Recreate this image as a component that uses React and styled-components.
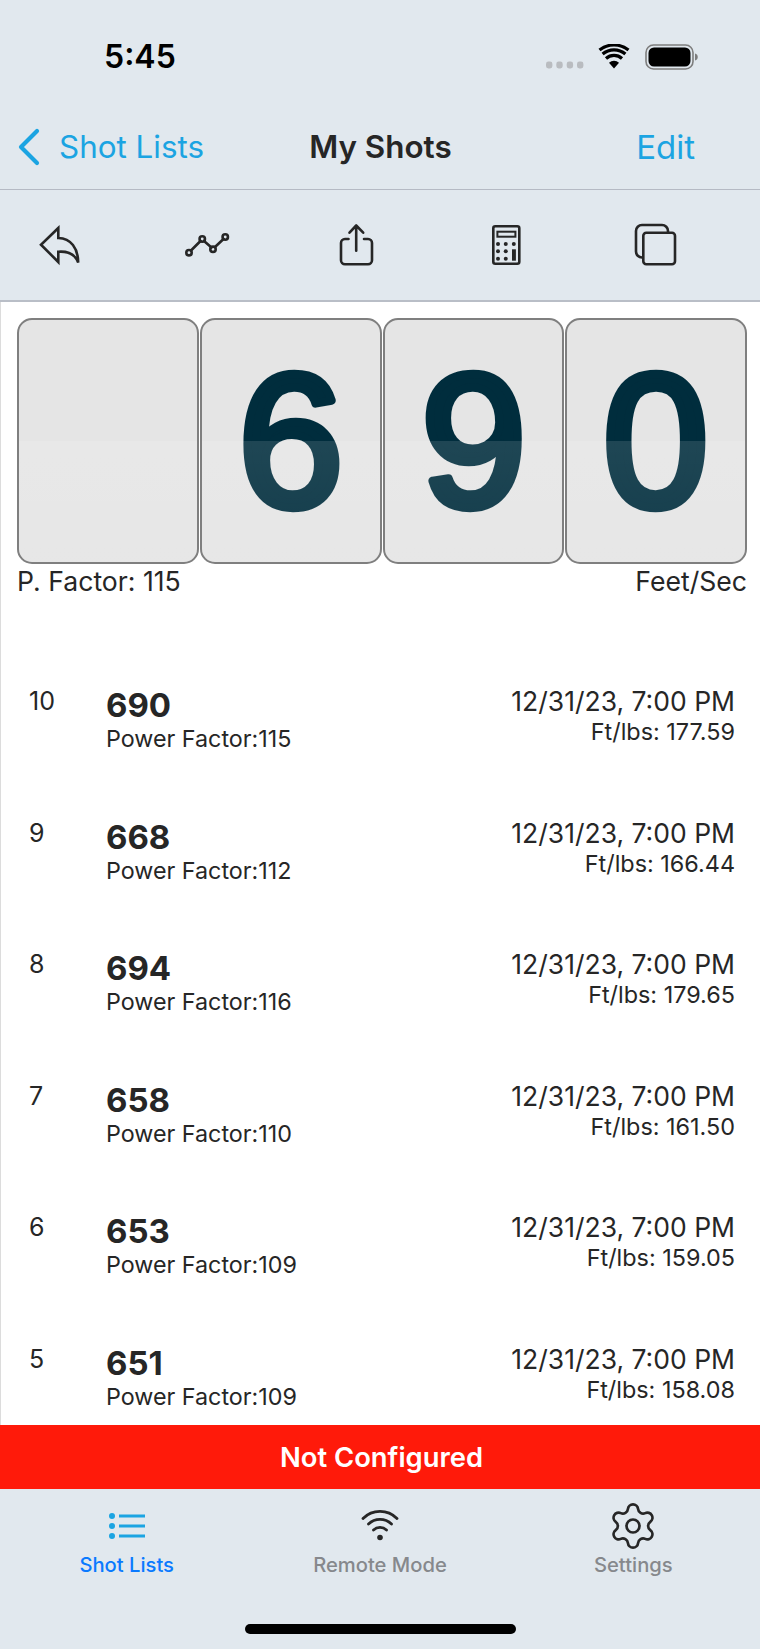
import React from 'react';
import styled, { createGlobalStyle } from 'styled-components';
import { Settings } from 'lucide-react';

const Global = createGlobalStyle`
  html, body { margin: 0; padding: 0; background: #fff; }
  * { box-sizing: border-box; }
  body { font-family: Inter, "Liberation Sans", sans-serif; color: #262626; }
`;

const Page = styled.div`
  width: 760px; height: 1649px; display: flex; flex-direction: column; overflow: hidden;
`;
const Top = styled.header`
  height: 189px; background: #e1e8ee; display: flex; flex-direction: column; flex: none;
`;
const Status = styled.div`
  height: 114px; flex: none; padding: 38px 62px 0 104px; display: flex; justify-content: space-between; align-items: flex-start;
`;
const Clock = styled.div`
  font-size: 32px; line-height: 38px; font-weight: 600; color: #000;
`;
const StatusIcons = styled.div`
  display: flex; align-items: center; gap: 14px; height: 38px; svg { display: block; }
`;
const Nav = styled.nav`
  height: 66px; flex: none; position: relative; display: flex; align-items: center; justify-content: space-between; padding: 0 65px 0 17px;
`;
const Back = styled.div`
  display: flex; align-items: center; gap: 18px; color: #1ba4e2; font-size: 31.4px; line-height: 40px;
`;
const Title = styled.div`
  position: absolute; left: 1px; right: 0; text-align: center; font-size: 31.4px; line-height: 40px; font-weight: 600; color: #262626; pointer-events: none;
`;
const Edit = styled.div`
  color: #1ba4e2; font-size: 33px; line-height: 40px;
`;
const Toolbar = styled.div`
  height: 113px; flex: none; background: #e1e8ee; border-top: 1px solid #b5bac4; border-bottom: 2px solid #b9bec7; display: flex; align-items: center; justify-content: space-between; padding: 0 80px 0 35px; svg { display: block; }
`;
const Main = styled.main`
  flex: 1; min-height: 0; overflow: hidden; border-left: 1px solid #dcdcdc; display: flex; flex-direction: column;
`;
const Counter = styled.section`
  padding: 16px 13px 0 16px; flex: none;
`;
const Cards = styled.div`
  display: flex; gap: 1px;
`;
const Card = styled.div`
  flex: 1; height: 246px; border: 2px solid #7f7f7f; border-radius: 15px; background: #e5e5e5; position: relative; overflow: hidden;
  &::after { content: ""; position: absolute; left: 0; right: 0; top: 50%; bottom: 0; background: linear-gradient(rgba(255,255,255,.12), rgba(255,255,255,.07)); }
`;
const DigitArt = styled.svg`
  display: block; width: 100%; height: 100%;
`;
const DigitText = styled.text`
  font-family: "Liberation Sans", Arial, sans-serif; font-weight: 400; font-size: 190px;
  fill: #002d3d; stroke: #002d3d; stroke-width: 8.5px; stroke-linejoin: round;
`;
const Labels = styled.div`
  display: flex; justify-content: space-between; font-size: 26.6px; line-height: 34px; color: #262626;
`;
const List = styled.div`
  padding-top: 87px; flex: none;
`;
const Row = styled.div`
  height: 131.5px; display: grid; grid-template-columns: 77px 1fr auto; padding: 0 25px 0 28px; align-items: start;
`;
const Num = styled.div`
  font-size: 25px; line-height: 32px; color: #262626;
`;
const Left = styled.div`
  display: flex; flex-direction: column;
`;
const Speed = styled.div`
  font-size: 33px; line-height: 40px; font-weight: 700; color: #262626;
`;
const Sub = styled.div`
  font-size: 23.3px; line-height: 28px; color: #262626;
`;
const Right = styled.div`
  display: flex; flex-direction: column; align-items: flex-end;
`;
const DateText = styled.div`
  font-size: 26.5px; line-height: 32px; color: #262626;
`;
const Energy = styled.div`
  font-size: 23.4px; line-height: 29px; color: #262626;
`;
const Banner = styled.div`
  height: 64px; flex: none; background: #ff1a0a; color: #fff; font-size: 27.4px; font-weight: 600; display: flex; align-items: center; justify-content: center; padding-left: 3px;
`;
const TabBar = styled.footer`
  height: 160px; flex: none; background: #e1e8ee; display: flex; flex-direction: column;
`;
const Tabs = styled.div`
  display: grid; grid-template-columns: repeat(3, 1fr); padding-top: 15px;
`;
const Tab = styled.div`
  display: flex; flex-direction: column; align-items: center; gap: 5px; color: ${p => p.$active ? '#0a7aff' : '#86888c'}; font-size: 20.2px; line-height: 28px; font-weight: 500;
`;
const TabIcon = styled.div`
  height: 44px; display: flex; align-items: center; justify-content: center; margin-bottom: -2px;
  svg { display: block; flex: none; }
`;
const Home = styled.div`
  width: 271px; height: 10px; border-radius: 5px; background: #000; margin: 45px auto 0;
`;

const rows = [
  [10, 690, 115, '177.59'], [9, 668, 112, '166.44'], [8, 694, 116, '179.65'],
  [7, 658, 110, '161.50'], [6, 653, 109, '159.05'], [5, 651, 109, '158.08'],
];

const ico = { width: 50, height: 44, viewBox: '0 0 50 44', fill: 'none', stroke: '#262626', strokeWidth: 2.6, strokeLinecap: 'round', strokeLinejoin: 'round' };

const Digit = ({ value }) => (
  <DigitArt viewBox="0 0 178 242">
    <DigitText x="89" y="186" textAnchor="middle">{value}</DigitText>
  </DigitArt>
);

export default function App() {
  return (
    <Page>
      <Global />
      <Top>
        <Status>
          <Clock>5:45</Clock>
          <StatusIcons>
            <svg width="38" height="10" viewBox="0 0 38 10" style={{ marginTop: 16 }}>
              {[3, 13.3, 23.7, 34].map(x => <rect key={x} x={x - 3} y="1.5" width="6.4" height="7" rx="2.4" fill="#b9bcc0" />)}
            </svg>
            <svg width="33" height="26" viewBox="0 0 33 26">
              <path d="M16 24.5 L11 18.7 a7.6 7.6 0 0 1 10 0 Z" fill="#000" />
              <path d="M8 14.5 a12 12 0 0 1 16 0 M4.6 10 a17.5 17.5 0 0 1 22.8 0 M1.5 6 a23.5 23.5 0 0 1 29 0" fill="none" stroke="#000" strokeWidth="3.2" />
            </svg>
            <svg width="53" height="26" viewBox="0 0 53 26">
              <rect x="1" y="1" width="47" height="24" rx="7.5" fill="none" stroke="#7d7d7d" strokeWidth="1.6" />
              <rect x="3.5" y="3.5" width="42" height="19" rx="5.5" fill="#000" />
              <path d="M50 9.5 a3.6 3.6 0 0 1 0 7 Z" fill="#7d7d7d" />
            </svg>
          </StatusIcons>
        </Status>
        <Nav>
          <Back>
            <svg width="24" height="38" viewBox="0 0 24 38"><path d="M20 3 L4 19 L20 35" fill="none" stroke="#1ba4e2" strokeWidth="4.2" strokeLinecap="round" strokeLinejoin="round" /></svg>
            <span>Shot Lists</span>
          </Back>
          <Title>My Shots</Title>
          <Edit>Edit</Edit>
        </Nav>
      </Top>
      <Toolbar>
        <svg {...ico} strokeLinecap="butt" strokeLinejoin="miter">
          <path d="M23.3 5 L6 21.7 L23.3 39 V28.7 C33 28 40 31 43.2 39.5 C43 25 36 15.5 23.3 15 Z" />
        </svg>
        <svg {...ico}>
          <path d="M7 27.5 L16.5 18 M20 18 L27.5 24.5 M31 24 L39.5 16" />
          <circle cx="5" cy="29.7" r="2.7" /><circle cx="18.25" cy="16" r="2.7" /><circle cx="29" cy="26.3" r="2.7" /><circle cx="41.25" cy="14" r="2.7" />
        </svg>
        <svg {...ico}>
          <path d="M23.2 27.7 V2.5 M16.5 9.7 L23.2 2.5 L30.2 9.7" />
          <path d="M15.5 16 H12 a4 4 0 0 0 -4 4 V37.3 a4 4 0 0 0 4 4 H35 a4 4 0 0 0 4 -4 V20 a4 4 0 0 0 -4 -4 H31" />
        </svg>
        <svg width="50" height="44" viewBox="0 0 50 44">
          <rect x="12.3" y="3.3" width="26" height="37.4" rx="2" fill="none" stroke="#262626" strokeWidth="2.6" />
          <rect x="16.4" y="8.7" width="18" height="5" fill="none" stroke="#262626" strokeWidth="2" />
          {[21, 28.3, 35.7].map(y => [17, 24.75].map(x => <circle key={x + '-' + y} cx={x} cy={y} r="2" fill="#262626" />))}
          <circle cx="32.8" cy="21" r="2" fill="#262626" />
          <rect x="31" y="26.3" width="3.9" height="11.4" fill="#262626" />
        </svg>
        <svg {...ico}>
          <path d="M12 34.5 a6 6 0 0 1 -6 -6 V8 a6 6 0 0 1 6 -6 H32 a6 6 0 0 1 6 6 V9.7" />
          <rect x="13.3" y="9.7" width="31.7" height="31.6" rx="3" />
        </svg>
      </Toolbar>
      <Main>
        <Counter>
          <Cards>
            <Card />
            <Card><Digit value="6" /></Card>
            <Card><Digit value="9" /></Card>
            <Card><Digit value="0" /></Card>
          </Cards>
          <Labels><span>P. Factor: 115</span><span>Feet/Sec</span></Labels>
        </Counter>
        <List>
          {rows.map(([n, v, pf, e]) => (
            <Row key={n}>
              <Num>{n}</Num>
              <Left><Speed>{v}</Speed><Sub>Power Factor:{pf}</Sub></Left>
              <Right><DateText>12/31/23, 7:00 PM</DateText><Energy>Ft/lbs: {e}</Energy></Right>
            </Row>
          ))}
        </List>
      </Main>
      <Banner>Not Configured</Banner>
      <TabBar>
        <Tabs>
          <Tab $active>
            <TabIcon>
              <svg width="38" height="42" viewBox="0 0 38 42">
                {[11, 21, 31].map(y => (
                  <g key={y}><circle cx="4" cy={y} r="3" fill="#1ba4e2" /><rect x="11" y={y - 1.5} width="26" height="3" fill="#1ba4e2" /></g>
                ))}
              </svg>
            </TabIcon>
            Shot Lists
          </Tab>
          <Tab>
            <TabIcon>
              <svg width="38" height="42" viewBox="0 0 38 42">
                <circle cx="19" cy="32.5" r="2.8" fill="#262626" />
                <path d="M12.5 25 a9.5 9.5 0 0 1 13 0 M7.5 19 a16.5 16.5 0 0 1 23 0 M2 13.5 a24 24 0 0 1 34 0" fill="none" stroke="#262626" strokeWidth="2.8" strokeLinecap="round" />
              </svg>
            </TabIcon>
            Remote Mode
          </Tab>
          <Tab>
            <TabIcon>
              <Settings size={52} strokeWidth={1.25} color="#262626" />
            </TabIcon>
            Settings
          </Tab>
        </Tabs>
        <Home />
      </TabBar>
    </Page>
  );
}
